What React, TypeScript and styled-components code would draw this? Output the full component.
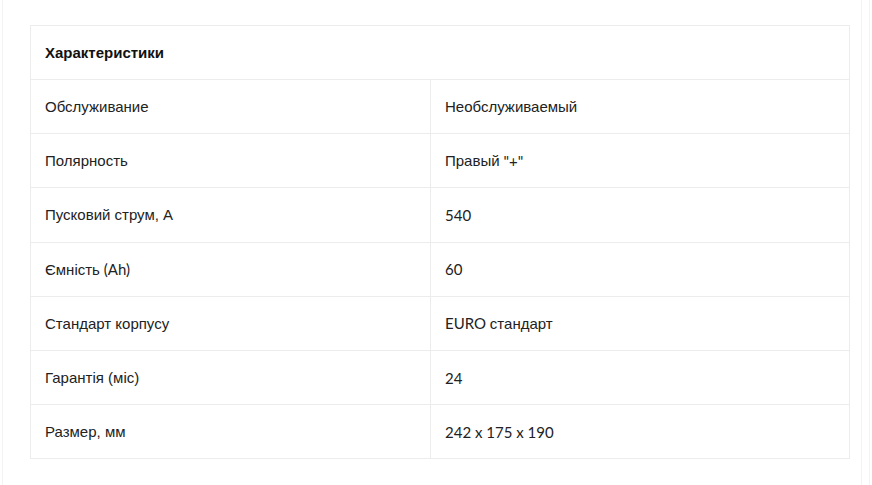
import React from "react";
import styled, { createGlobalStyle } from "styled-components";

const Global = createGlobalStyle`
  html, body { margin: 0; padding: 0; background: #fff; }
  body { font-family: Lato, "Liberation Sans", Arial, sans-serif; color: #222; }
`;

const Page = styled.div`
  position: relative;
  width: 872px;
  height: 485px;
  box-sizing: border-box;
  padding: 25px 0 0 30px;
  border-left: 1px solid #f3f3f3;
  margin-left: 2px;
  &::after {
    content: "";
    position: absolute;
    top: 0;
    bottom: 0;
    left: 858px;
    width: 7px;
    border-left: 1px solid #f3f3f3;
    border-right: 1px solid #f3f3f3;
  }
`;

const Table = styled.div`
  width: 820px;
  margin-left: -3px;
  box-sizing: border-box;
  border: 1px solid #ececec;
  display: flex;
  flex-direction: column;
`;

const Header = styled.div`
  height: 54px;
  box-sizing: border-box;
  display: flex;
  align-items: center;
  padding: 0 14px;
  font-size: 15px;
  font-weight: 700;
  color: #111;
  border-bottom: 1px solid #ececec;
`;

const Row = styled.div<{ $last?: boolean }>`
  display: grid;
  grid-template-columns: 399px 1fr;
  height: ${(p) => (p.$last ? "53px" : "54.2px")};
  box-sizing: border-box;
  border-bottom: ${(p) => (p.$last ? "none" : "1px solid #ececec")};
`;

const Cell = styled.div<{ $value?: boolean }>`
  display: flex;
  align-items: center;
  padding: 0 14px;
  font-size: 15px;
  color: #222;
  white-space: pre;
  border-left: ${(p) => (p.$value ? "1px solid #ececec" : "none")};
`;

const Cyr = styled.span`
  font-family: "Liberation Sans", Arial, sans-serif;
`;

const Lat = styled.span`
  font-family: Lato, "Liberation Sans", sans-serif;
`;

function Mixed({ text }: { text: string }) {
  const parts = text.match(/[\u0400-\u04FF,.()\s]*[\u0400-\u04FF]+[\u0400-\u04FF,.()]*|[^\u0400-\u04FF]+/g) || [text];
  return (
    <>
      {parts.map((p, i) =>
        /[\u0400-\u04FF]/.test(p) ? <Cyr key={i}>{p}</Cyr> : <Lat key={i}>{p}</Lat>
      )}
    </>
  );
}

const rows: [string, string][] = [
  ["Обслуживание", "Необслуживаемый"],
  ["Полярность", 'Правый "+"'],
  ["Пусковий струм, А", "540"],
  ["Ємність (Ah)", "60"],
  ["Стандарт корпусу", "EURO стандарт"],
  ["Гарантія (міс)", "24"],
  ["Размер, мм", "242 x 175 x 190"],
];

export default function App() {
  return (
    <>
      <Global />
      <Page>
        <Table>
          <Header>
            <Cyr>Характеристики</Cyr>
          </Header>
          {rows.map(([k, v], i) => (
            <Row key={k} $last={i === rows.length - 1}>
              <Cell>
                <Mixed text={k} />
              </Cell>
              <Cell $value>
                <Mixed text={v} />
              </Cell>
            </Row>
          ))}
        </Table>
      </Page>
    </>
  );
}
